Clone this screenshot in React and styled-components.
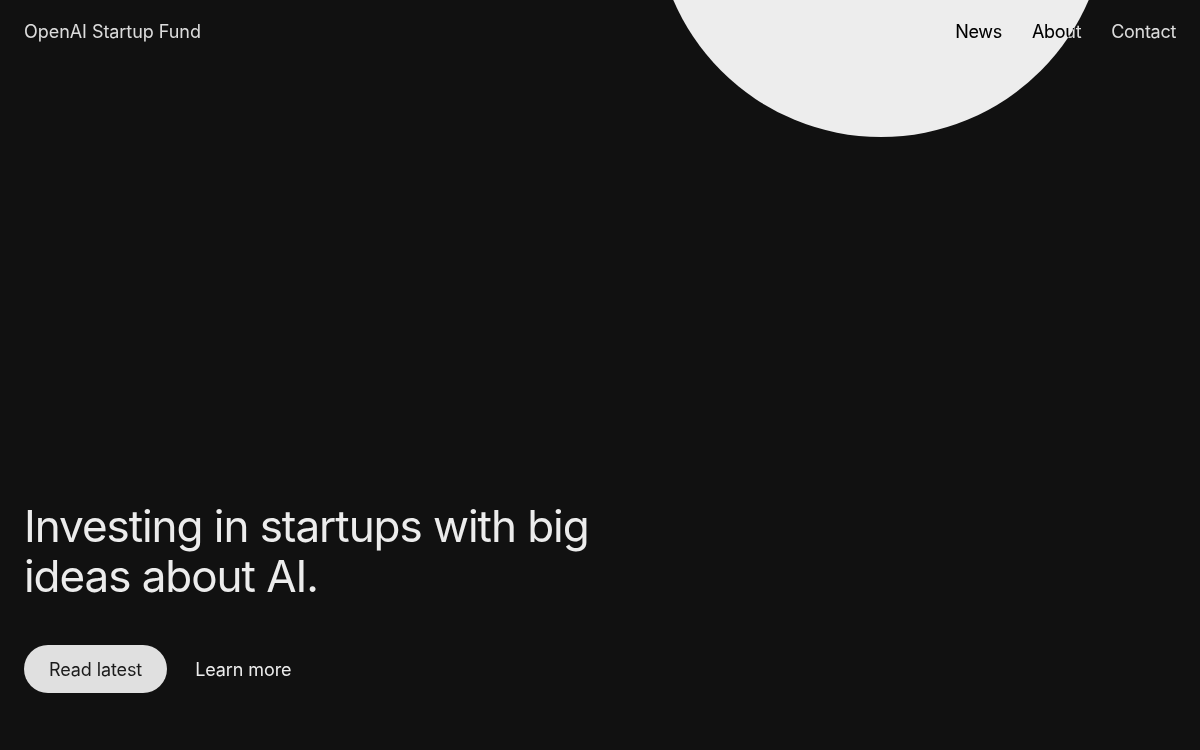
import React from "react";
import styled, { createGlobalStyle } from "styled-components";

const Global = createGlobalStyle`
  html, body { margin: 0; padding: 0; background: #111111; }
  body { font-family: Inter, "Noto Sans", sans-serif; color: #ececec; }
  * { box-sizing: border-box; }
`;

const Page = styled.div`
  position: relative;
  min-height: 750px;
  height: 100vh;
  overflow: hidden;
  background: #111111;
  display: flex;
  flex-direction: column;
  justify-content: space-between;
  isolation: isolate;
`;

const Circle = styled.div`
  position: absolute;
  width: 452px;
  height: 452px;
  border-radius: 50%;
  background: #ededed;
  left: 655px;
  top: -315px;
  z-index: 0;
`;

const Header = styled.header`
  position: relative;
  z-index: 1;
  display: flex;
  justify-content: space-between;
  align-items: center;
  padding: 9px 24px 0 24px;
  height: 44px;
  box-sizing: content-box;
  mix-blend-mode: difference;
`;

const Logo = styled.a`
  font-size: 18px;
  font-weight: 400;
  color: #ededed;
  text-decoration: none;
  letter-spacing: -0.05px;
`;

const Nav = styled.nav`
  display: flex;
  gap: 30px;
`;

const NavLink = styled.a`
  font-size: 18px;
  color: #ededed;
  text-decoration: none;
  letter-spacing: -0.3px;
`;

const Hero = styled.section`
  position: relative;
  z-index: 1;
  padding: 0 24px 57px 24px;
  display: flex;
  flex-direction: column;
  gap: 44px;
`;

const Title = styled.h1`
  margin: 0;
  font-size: 44px;
  font-weight: 400;
  line-height: 50px;
  letter-spacing: -1.05px;
  max-width: 600px;
  color: #ececec;
`;

const Actions = styled.div`
  display: flex;
  align-items: center;
  gap: 28px;
`;

const PillButton = styled.a`
  display: inline-flex;
  align-items: center;
  justify-content: center;
  height: 48px;
  padding: 0 25px;
  border-radius: 24px;
  background: #e0e0e0;
  color: #1b1b1b;
  font-size: 18px;
  text-decoration: none;
  letter-spacing: -0.1px;
`;

const TextLink = styled.a`
  color: #ececec;
  font-size: 18px;
  text-decoration: none;
  letter-spacing: -0.1px;
`;

export default function App() {
  return (
    <>
      <Global />
      <Page>
        <Circle />
        <Header>
          <Logo href="#">OpenAI Startup Fund</Logo>
          <Nav>
            <NavLink href="#">News</NavLink>
            <NavLink href="#">About</NavLink>
            <NavLink href="#">Contact</NavLink>
          </Nav>
        </Header>
        <Hero>
          <Title>Investing in startups with big ideas about AI.</Title>
          <Actions>
            <PillButton href="#">Read latest</PillButton>
            <TextLink href="#">Learn more</TextLink>
          </Actions>
        </Hero>
      </Page>
    </>
  );
}
